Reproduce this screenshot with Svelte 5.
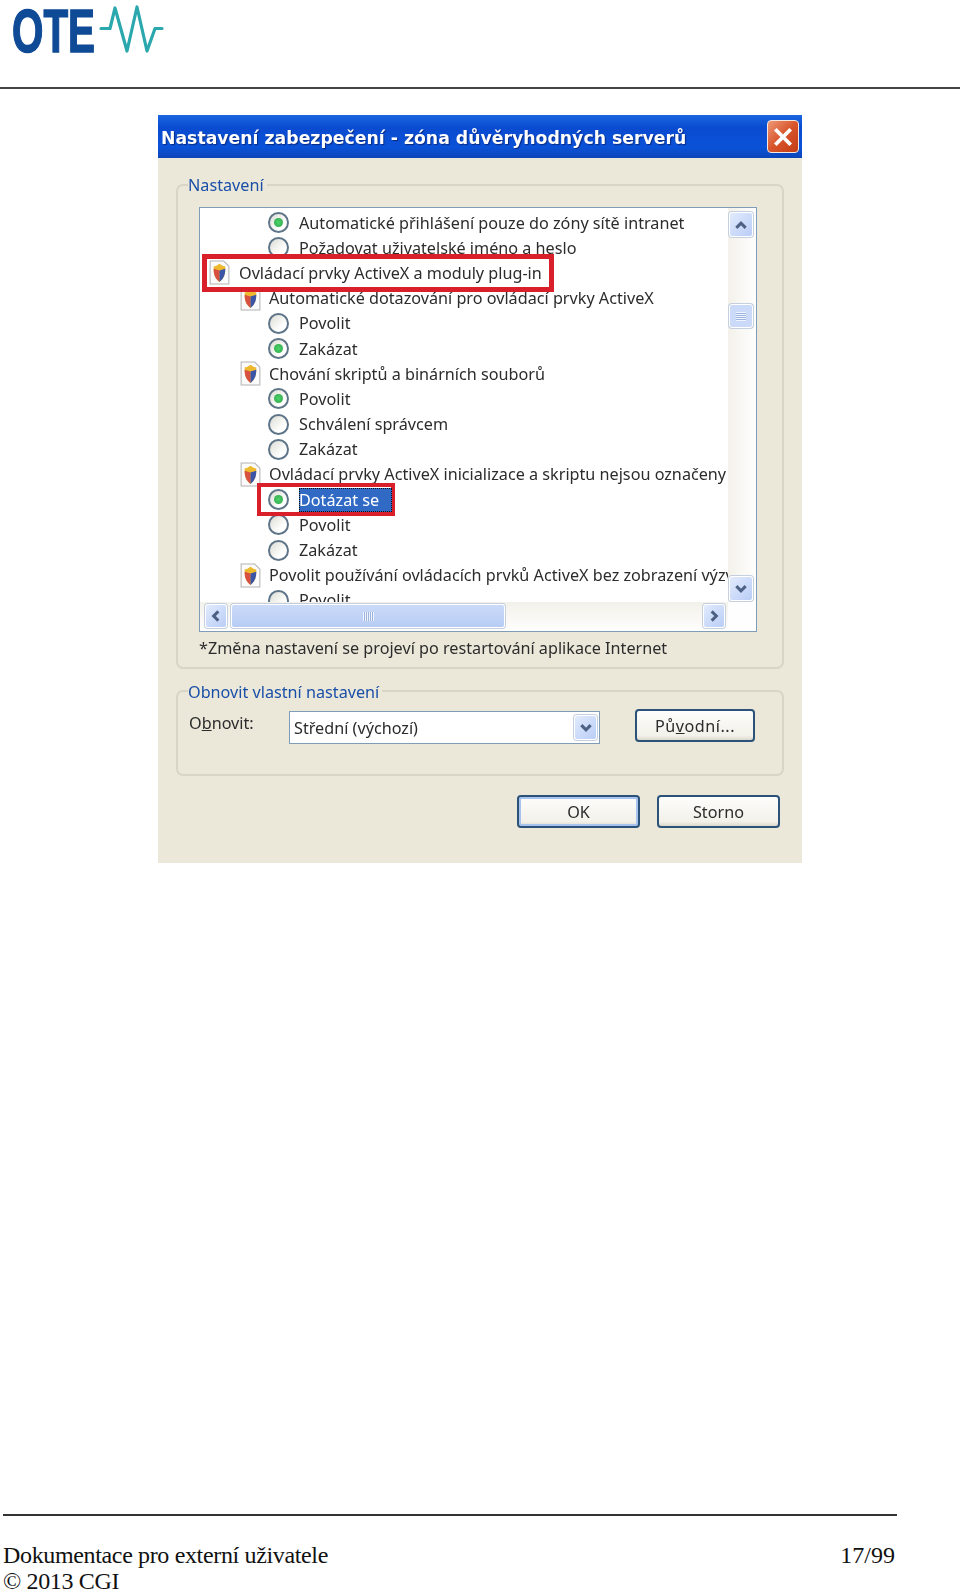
<script>
	const rows = [
		{ kind: 'opt', text: 'Automatické přihlášení pouze do zóny sítě intranet', on: true },
		{ kind: 'opt', text: 'Požadovat uživatelské jméno a heslo' },
		{ kind: 'top', text: 'Ovládací prvky ActiveX a moduly plug-in', mark: 'mark-top' },
		{ kind: 'cat', text: 'Automatické dotazování pro ovládací prvky ActiveX' },
		{ kind: 'opt', text: 'Povolit' },
		{ kind: 'opt', text: 'Zakázat', on: true },
		{ kind: 'cat', text: 'Chování skriptů a binárních souborů' },
		{ kind: 'opt', text: 'Povolit', on: true },
		{ kind: 'opt', text: 'Schválení správcem' },
		{ kind: 'opt', text: 'Zakázat' },
		{ kind: 'cat', text: 'Ovládací prvky ActiveX inicializace a skriptu nejsou označeny' },
		{ kind: 'opt', text: 'Dotázat se', on: true, selected: true, mark: 'mark-sel' },
		{ kind: 'opt', text: 'Povolit' },
		{ kind: 'opt', text: 'Zakázat' },
		{ kind: 'cat', text: 'Povolit používání ovládacích prvků ActiveX bez zobrazení výzvy' },
		{ kind: 'opt', text: 'Povolit' }
	];
</script>

{#snippet chevron(d)}
	<svg viewBox="0 0 12 12" width="14" height="14"><path {d} fill="none" stroke="#4d6185" stroke-width="2.6" /></svg>
{/snippet}

<div class="page">
	<header>
		<svg class="logo" viewBox="0 0 170 60" width="170" height="60">
			<text x="12" y="52" textLength="83" lengthAdjust="spacingAndGlyphs" class="logo-text">OTE</text>
			<path d="M101 28.500h9L115 8l12 43 10-44 10 44 8-22.500h7" fill="none" stroke="#2ba8ad" stroke-width="3.200" stroke-linecap="round" stroke-linejoin="round" />
		</svg>
	</header>

	<main>
		<div class="dialog">
			<div class="titlebar">
				<span>Nastavení zabezpečení - zóna důvěryhodných serverů</span>
				<button class="close" aria-label="Zavřít">
					<svg viewBox="0 0 20 20" width="22" height="22"><path d="M3 3l14 14M17 3L3 17" stroke="#fff" stroke-width="3.400" /></svg>
				</button>
			</div>

			<div class="body">
				<fieldset class="settings">
					<legend>Nastavení</legend>
					<div class="listbox">
						<div class="list">
							{#each rows as row}
								<div class="row {row.kind}">
									{#if row.mark}<span class="mark {row.mark}"></span>{/if}
									{#if row.kind === 'opt'}
										<span class="radio"><span class:dot={row.on}></span></span>
									{:else}
										<svg class="shield" viewBox="0 0 20 24" width="21" height="25">
											<path d="M1 1h13l5 5v17H1z" fill="#fbfbfb" stroke="#b4b4b4" />
											<path d="M10 3.500c2 1.500 4 2.500 5.500 2.500 .5 6.500-1 12-5.500 15C5.500 18 4 12.500 4.500 6c1.500 0 3.500-1 5.500-2.500z" fill="#efb92e" />
											<path d="M10 10v11C5.500 18 4 12.500 4.500 8.500z" fill="#d8503f" />
											<path d="M10 10l5.500-1.500c.2 5-1.400 9.500-5.500 12.500z" fill="#3a55a8" />
										</svg>
									{/if}
									<span class="label" class:selected={row.selected}>{row.text}</span>
								</div>
							{/each}
						</div>
						<div class="vbar">
							<button class="sb" aria-label="Nahoru">{@render chevron('M2 8.500l4-4 4 4')}</button>
							<div class="vthumb"><span class="grip"></span></div>
							<button class="sb end" aria-label="Dolů">{@render chevron('M2 3.500l4 4 4-4')}</button>
						</div>
						<div class="hbar">
							<button class="sb" aria-label="Vlevo">{@render chevron('M8 2L4 6l4 4')}</button>
							<div class="hthumb"><span class="grip-h"></span></div>
							<button class="sb end" aria-label="Vpravo">{@render chevron('M4 2l4 4-4 4')}</button>
						</div>
						<div class="corner"></div>
					</div>
					<p class="note">*Změna nastavení se projeví po restartování aplikace Internet</p>
				</fieldset>

				<fieldset class="reset">
					<legend>Obnovit vlastní nastavení</legend>
					<div class="reset-row">
						<span class="reset-label">O<u>b</u>novit:</span>
						<div class="select">
							<span>Střední (výchozí)</span>
							<button class="sb" aria-label="Otevřít">{@render chevron('M2 3.500l4 4 4-4')}</button>
						</div>
						<button class="btn default-btn">Pů<u>v</u>odní...</button>
					</div>
				</fieldset>

				<div class="actions">
					<button class="btn primary">OK</button>
					<button class="btn">Storno</button>
				</div>
			</div>
		</div>
	</main>

	<footer>
		<div class="foot-row"><span class="tight">Dokumentace pro externí uživatele</span><span>17/99</span></div>
		<div class="tight">© 2013 CGI</div>
	</footer>
</div>

<style>
	:global(body) { background: #fff; }
	.page { height: 1594px; overflow: hidden; display: flex; flex-direction: column; font-family: "Noto Sans", sans-serif; }
	header { height: 87px; border-bottom: 2px solid #444; }
	.logo { display: block; filter: blur(0.4px); }
	.logo-text { font-family: "Liberation Sans", sans-serif; font-weight: 700; font-size: 62px; fill: #0f4a96; stroke: #0f4a96; stroke-width: 1.5px; }
	main { flex: 1; padding: 26px 0 0 158px; }

	.dialog { width: 644px; height: 748px; background: #ebe8da; font-size: 16.2px; color: #2c2c2c; filter: blur(0.35px); }
	.titlebar { height: 43px; display: flex; align-items: center; justify-content: space-between; padding: 0 3px 0 3px; box-sizing: border-box; background: linear-gradient(#1a66e0, #0a4bd0 30%, #0a52d8 75%, #0d45b8); color: #fff; }
	.titlebar span { font-family: "DejaVu Sans", sans-serif; font-weight: 700; font-size: 17.3px; white-space: nowrap; text-shadow: 1px 1px 1px #0a2a80; padding-top: 3px; }
	.close { width: 32px; height: 33px; padding: 0; border: 1px solid #f4e8e0; border-radius: 4px; background: linear-gradient(135deg, #ee9a78, #d8542a 50%, #c23c14); display: flex; align-items: center; justify-content: center; }

	.body { padding: 17px 18px 0; font-family: inherit; }
	fieldset { margin: 0; border: 2px solid #d8d5c6; border-radius: 7px; min-width: 0; }
	legend { padding: 0 3px 0 0; color: #1a4fa8; font-size: 16.2px; line-height: 20px; }
	.settings { height: 494px; box-sizing: border-box; padding: 12px 25px 0 21px; }
	.settings legend { margin-left: -11px; }
	.reset { height: 95px; box-sizing: border-box; margin-top: 12px; padding: 0 27px 0 11px; }
	.reset legend { margin-left: -1px; position: relative; top: 1px; }

	.listbox { height: 425px; box-sizing: border-box; border: 1px solid #7f9db9; background: #fff; display: grid; grid-template-columns: 1fr 28px; grid-template-rows: 394px 1fr; }
	.list { overflow: hidden; padding-top: 2px; position: relative; }
	.row { height: 25.2px; display: flex; align-items: center; white-space: nowrap; position: relative; }
	.row.opt { padding-left: 68px; }
	.row.opt .label { margin-left: 10px; }
	.row.cat { padding-left: 40px; }
	.row.top { padding-left: 9px; }
	.row.top .label { margin-left: 9px; }
	.row:has(.mark) { z-index: 1; }
	.label { position: relative; margin-left: 8px; line-height: 24px; }
	.selected { background: #316ac5; color: #fff; outline: 1px dotted #111; outline-offset: -1px; padding: 0 13px 0 0; }
	.shield { position: relative; flex: none; }

	.radio { position: relative; flex: none; width: 21px; height: 21px; box-sizing: border-box; border-radius: 50%; border: 2px solid #5e7488; background: linear-gradient(135deg, #dcdcd4, #fff 70%); display: flex; align-items: center; justify-content: center; }
	.dot { width: 9px; height: 9px; border-radius: 50%; background: radial-gradient(#4fd16a, #2aa648); }

	.mark { position: absolute; background: #fff; border: 5px solid #d81f2a; box-sizing: border-box; }
	.mark-top { left: 2px; top: -6px; width: 352px; height: 38px; }
	.mark-sel { left: 57px; top: -4px; width: 138px; height: 33px; border-width: 4px; }

	.sb { padding: 0; width: 24px; height: 25px; border: 1px solid #fff; border-radius: 3px; background: linear-gradient(135deg, #e2ebfd, #b9cdf6); box-shadow: 0 0 0 1px #c4cfdf; display: flex; align-items: center; justify-content: center; flex: none; }
	.vbar { padding: 4px 2px 1px 1px; display: flex; flex-direction: column; background: linear-gradient(90deg, #f3f1ea, #fefefe); position: relative; }
	.vbar .end { margin-top: auto; }
	.vthumb { margin: 67px 0 0; width: 24px; height: 24px; border: 1px solid #fff; border-radius: 3px; background: #cbdaf8; box-shadow: 0 0 0 1px #c4cfdf; display: flex; align-items: center; justify-content: center; box-sizing: border-box; }
	.grip { width: 10px; height: 9px; background: repeating-linear-gradient(#f0f4fe 0 1px, #9db4df 1px 2px); }
	.hbar { padding: 1px 3px 2px 5px; display: flex; align-items: center; gap: 4px; background: linear-gradient(#f3f1ea, #fefefe); }
	.hbar .sb { width: 22px; height: 24px; }
	.hbar .end { margin-left: auto; }
	.hthumb { width: 274px; height: 24px; box-sizing: border-box; border: 1px solid #fff; border-radius: 3px; background: linear-gradient(#cbdaf8, #b8ccf4); box-shadow: 0 0 0 1px #c4cfdf; display: flex; align-items: center; justify-content: center; }
	.grip-h { width: 11px; height: 9px; background: repeating-linear-gradient(90deg, #f0f4fe 0 1px, #9db4df 1px 2px); }
	.corner { background: #fefefe; }

	.note { margin: 4px 0 0; line-height: 24px; white-space: nowrap; }
	.reset-row { display: flex; align-items: flex-start; }
	.reset-label { width: 100px; line-height: 22px; margin-top: 11px; }
	.select { width: 311px; height: 33px; box-sizing: border-box; border: 1px solid #7f9db9; background: #fff; display: flex; align-items: center; justify-content: space-between; padding: 0 2px 0 4px; margin-top: 10px; }
	.select .sb { width: 23px; height: 25px; }
	.btn { font: inherit; color: #2c2c2c; background: linear-gradient(#fdfdfb, #f2f1ea 85%, #dcd8cc); border: 2px solid #2b5278; border-radius: 4px; padding: 0; }
	.default-btn { width: 120px; height: 33px; margin: 8px 0 0 35px; letter-spacing: 0.5px; }
	.actions { display: flex; justify-content: flex-end; gap: 17px; margin-top: 19px; padding-right: 4px; }
	.actions .btn { width: 123px; height: 33px; }
	.primary { box-shadow: inset 0 0 0 2px #a8c4ee; }

	footer { margin: 0 63px 0 3px; border-top: 2px solid #333; padding-top: 26px; font-family: "Liberation Serif", serif; font-size: 24px; line-height: 26px; color: #111; }
	.foot-row { display: flex; justify-content: space-between; padding-right: 2px; }
	.tight { letter-spacing: -0.35px; }
</style>
